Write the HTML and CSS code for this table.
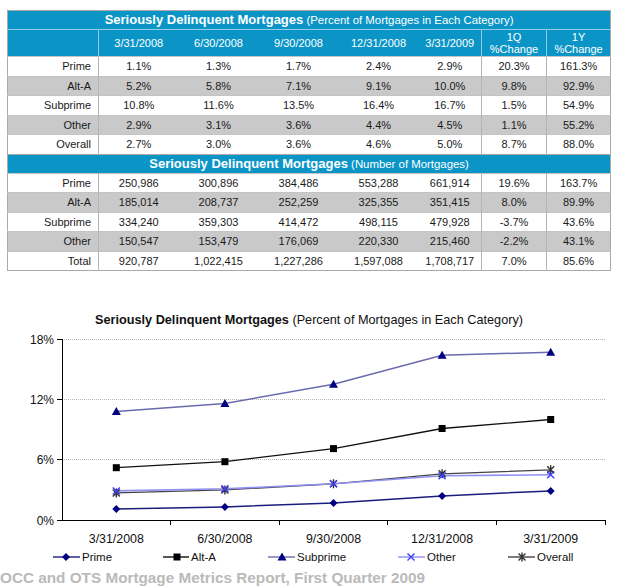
FILE: index.html
```html
<!DOCTYPE html>
<html>
<head>
<meta charset="utf-8">
<link rel="stylesheet" href="styles.css">
</head>
<body>
<table class="grid">
  <colgroup>
    <col class="c-label"><col class="c-date"><col class="c-date"><col class="c-date"><col class="c-date"><col class="c-last"><col class="c-q"><col class="c-y">
  </colgroup>
  <tr class="band title">
    <td colspan="8"><b>Seriously Delinquent Mortgages</b> <span>(Percent of Mortgages in Each Category)</span></td>
  </tr>
  <tr class="band head">
    <td class="lab"></td><td>3/31/2008</td><td>6/30/2008</td><td>9/30/2008</td><td>12/31/2008</td><td class="sep">3/31/2009</td><td class="sep">1Q<br>%Change</td><td>1Y<br>%Change</td>
  </tr>
  <tr class="row"><td class="lab">Prime</td><td>1.1%</td><td>1.3%</td><td>1.7%</td><td>2.4%</td><td class="sep">2.9%</td><td class="sep">20.3%</td><td>161.3%</td></tr>
  <tr class="row alt"><td class="lab">Alt-A</td><td>5.2%</td><td>5.8%</td><td>7.1%</td><td>9.1%</td><td class="sep">10.0%</td><td class="sep">9.8%</td><td>92.9%</td></tr>
  <tr class="row"><td class="lab">Subprime</td><td>10.8%</td><td>11.6%</td><td>13.5%</td><td>16.4%</td><td class="sep">16.7%</td><td class="sep">1.5%</td><td>54.9%</td></tr>
  <tr class="row alt"><td class="lab">Other</td><td>2.9%</td><td>3.1%</td><td>3.6%</td><td>4.4%</td><td class="sep">4.5%</td><td class="sep">1.1%</td><td>55.2%</td></tr>
  <tr class="row"><td class="lab">Overall</td><td>2.7%</td><td>3.0%</td><td>3.6%</td><td>4.6%</td><td class="sep">5.0%</td><td class="sep">8.7%</td><td>88.0%</td></tr>
  <tr class="band title title2">
    <td colspan="8"><b>Seriously Delinquent Mortgages</b> <span>(Number of Mortgages)</span></td>
  </tr>
  <tr class="row"><td class="lab">Prime</td><td>250,986</td><td>300,896</td><td>384,486</td><td>553,288</td><td class="sep">661,914</td><td class="sep">19.6%</td><td>163.7%</td></tr>
  <tr class="row alt"><td class="lab">Alt-A</td><td>185,014</td><td>208,737</td><td>252,259</td><td>325,355</td><td class="sep">351,415</td><td class="sep">8.0%</td><td>89.9%</td></tr>
  <tr class="row"><td class="lab">Subprime</td><td>334,240</td><td>359,303</td><td>414,472</td><td>498,115</td><td class="sep">479,928</td><td class="sep">-3.7%</td><td>43.6%</td></tr>
  <tr class="row alt"><td class="lab">Other</td><td>150,547</td><td>153,479</td><td>176,069</td><td>220,330</td><td class="sep">215,460</td><td class="sep">-2.2%</td><td>43.1%</td></tr>
  <tr class="row"><td class="lab">Total</td><td>920,787</td><td>1,022,415</td><td>1,227,286</td><td>1,597,088</td><td class="sep">1,708,717</td><td class="sep">7.0%</td><td>85.6%</td></tr>
</table>

<svg class="chart" width="627" height="290" viewBox="0 278 627 290" xmlns="http://www.w3.org/2000/svg">
  <text class="ctitle" x="95" y="324"><tspan font-weight="bold">Seriously Delinquent Mortgages</tspan> (Percent of Mortgages in Each Category)</text>
  <g stroke="#b8b8b8" stroke-width="1" stroke-dasharray="1 1">
    <line x1="62" y1="339.5" x2="605" y2="339.5"/>
    <line x1="62" y1="399.5" x2="605" y2="399.5"/>
    <line x1="62" y1="459.5" x2="605" y2="459.5"/>
  </g>
  <g stroke="#000" stroke-width="1">
    <line x1="62.5" y1="339" x2="62.5" y2="521"/>
    <line x1="62" y1="520.5" x2="606" y2="520.5"/>
    <line x1="57" y1="339.5" x2="62" y2="339.5"/>
    <line x1="57" y1="399.5" x2="62" y2="399.5"/>
    <line x1="57" y1="459.5" x2="62" y2="459.5"/>
    <line x1="57" y1="520.5" x2="62" y2="520.5"/>
    <line x1="170.5" y1="520" x2="170.5" y2="525"/>
    <line x1="279.5" y1="520" x2="279.5" y2="525"/>
    <line x1="387.5" y1="520" x2="387.5" y2="525"/>
    <line x1="496.5" y1="520" x2="496.5" y2="525"/>
    <line x1="605.5" y1="520" x2="605.5" y2="525"/>
  </g>
  <g class="ylab" text-anchor="end">
    <text x="54" y="343.5">18%</text>
    <text x="54" y="403.5">12%</text>
    <text x="54" y="463.5">6%</text>
    <text x="54" y="524.5">0%</text>
  </g>
  <g class="xlab" text-anchor="middle">
    <text x="116.3" y="543">3/31/2008</text>
    <text x="224.9" y="543">6/30/2008</text>
    <text x="333.5" y="543">9/30/2008</text>
    <text x="442.1" y="543">12/31/2008</text>
    <text x="550.7" y="543">3/31/2009</text>
  </g>

  <defs>
    <path id="dia" d="M0,-4 L4,0 L0,4 L-4,0 Z" fill="#000080"/>
    <rect id="sq" x="-3.5" y="-3.5" width="7" height="7" fill="#000"/>
    <path id="tri" d="M0,-4.5 L4.5,3.5 L-4.5,3.5 Z" fill="#000080"/>
    <path id="xm" d="M-3.5,-3.5 L3.5,3.5 M-3.5,3.5 L3.5,-3.5" stroke="#3d3dff" stroke-width="1.4" fill="none"/>
    <path id="ast" d="M-3.5,-3.5 L3.5,3.5 M-3.5,3.5 L3.5,-3.5 M0,-4.5 L0,4.5" stroke="#333" stroke-width="1.4" fill="none"/>
  </defs>

  <!-- Subprime -->
  <polyline points="116.3,411.5 224.9,403.4 333.5,384.3 442.1,355.2 550.7,352.2" fill="none" stroke="#6a6aae" stroke-width="1.5"/>
  <use href="#tri" x="116.3" y="411.5"/><use href="#tri" x="224.9" y="403.4"/><use href="#tri" x="333.5" y="384.3"/><use href="#tri" x="442.1" y="355.2"/><use href="#tri" x="550.7" y="352.2"/>
  <!-- Alt-A -->
  <polyline points="116.3,467.7 224.9,461.7 333.5,448.6 442.1,428.5 550.7,419.5" fill="none" stroke="#111" stroke-width="1.3"/>
  <use href="#sq" x="116.3" y="467.7"/><use href="#sq" x="224.9" y="461.7"/><use href="#sq" x="333.5" y="448.6"/><use href="#sq" x="442.1" y="428.5"/><use href="#sq" x="550.7" y="419.5"/>
  <!-- Overall -->
  <polyline points="116.3,492.9 224.9,489.9 333.5,483.8 442.1,473.8 550.7,469.8" fill="none" stroke="#444" stroke-width="1.3"/>
  <!-- Other -->
  <polyline points="116.3,490.9 224.9,488.8 333.5,483.8 442.1,475.8 550.7,474.8" fill="none" stroke="#9090f2" stroke-width="1.6"/>
  <use href="#ast" x="116.3" y="492.9"/><use href="#ast" x="224.9" y="489.9"/><use href="#ast" x="333.5" y="483.8"/><use href="#ast" x="442.1" y="473.8"/><use href="#ast" x="550.7" y="469.8"/>
  <use href="#xm" x="116.3" y="490.9"/><use href="#xm" x="224.9" y="488.8"/><use href="#xm" x="333.5" y="483.8"/><use href="#xm" x="442.1" y="475.8"/><use href="#xm" x="550.7" y="474.8"/>
  <!-- Prime -->
  <polyline points="116.3,508.9 224.9,506.9 333.5,502.9 442.1,495.9 550.7,490.9" fill="none" stroke="#1c1c7c" stroke-width="1.5"/>
  <use href="#dia" x="116.3" y="508.9"/><use href="#dia" x="224.9" y="506.9"/><use href="#dia" x="333.5" y="502.9"/><use href="#dia" x="442.1" y="495.9"/><use href="#dia" x="550.7" y="490.9"/>

  <!-- Legend -->
  <g class="legend">
    <line x1="53" y1="557" x2="80" y2="557" stroke="#1c1c7c" stroke-width="1.4"/><use href="#dia" x="66" y="557"/>
    <text x="82" y="561">Prime</text>
    <line x1="163" y1="557" x2="189" y2="557" stroke="#111" stroke-width="1.4"/><use href="#sq" x="177" y="557"/>
    <text x="191" y="561">Alt-A</text>
    <line x1="268" y1="557" x2="295" y2="557" stroke="#6a6aae" stroke-width="1.4"/><use href="#tri" x="282" y="557"/>
    <text x="297" y="561">Subprime</text>
    <line x1="398" y1="557" x2="425" y2="557" stroke="#9090f2" stroke-width="1.4"/><use href="#xm" x="411" y="557"/>
    <text x="427" y="561">Other</text>
    <line x1="508" y1="557" x2="535" y2="557" stroke="#444" stroke-width="1.4"/><use href="#ast" x="522" y="557"/>
    <text x="537" y="561">Overall</text>
  </g>
</svg>
<p class="source">OCC and OTS Mortgage Metrics Report, First Quarter 2009</p>
</body>
</html>
```
FILE: styles.css
```css
html, body {
  margin: 0;
  padding: 0;
  background: #fff;
  width: 627px;
  height: 588px;
  overflow: hidden;
  font-family: "Liberation Sans", Arial, sans-serif;
}

.grid {
  margin: 10px 0 0 7px;
  width: 603px;
  border-collapse: collapse;
  table-layout: fixed;
  border: 1px solid #a9a9a9;
  font-size: 11px;
  color: #1a1a1a;
}

.c-label { width: 91px; }
.c-date { width: 80px; }
.c-last { width: 63px; }
.c-q { width: 65px; }
.c-y { width: 64px; }

.grid td {
  padding: 0;
  text-align: center;
  white-space: nowrap;
}

.band td {
  background: #0b95c7;
  color: #fff;
}

.title td {
  height: 18px;
  font-size: 11.4px;
  line-height: 14px;
}

.title b {
  font-size: 13px;
  font-weight: bold;
}

.title2 td {
  height: 18px;
  border-top: 1px solid #a9a9a9;
}

.head td {
  height: 26px;
  line-height: 12px;
  border-top: 1px solid #8fcde6;
}

.head td.lab,
.head td.sep {
  border-right: 1px solid #8fcde6;
}

.row td {
  height: 18.5px;
  border-top: 1px solid #c4c4c4;
}

.row.alt td {
  background: #c9c9c9;
}

.row td.lab {
  text-align: right;
  padding-right: 7px;
  border-right: 1px solid #b4b4b4;
}

.row td.sep {
  border-right: 1px solid #b4b4b4;
}

.chart {
  display: block;
  margin-top: 7px;
  font-family: "Liberation Sans", Arial, sans-serif;
}

.ctitle {
  font-size: 12.7px;
  fill: #111;
}

.ylab {
  font-size: 12px;
  fill: #111;
}

.xlab {
  font-size: 12.4px;
  fill: #111;
}

.legend {
  font-size: 11.5px;
  fill: #111;
}

.source {
  margin: 1px 0 0;
  padding-left: 0;
  font-size: 15.3px;
  font-weight: bold;
  line-height: 18px;
  color: #bababa;
  white-space: nowrap;
}
```
